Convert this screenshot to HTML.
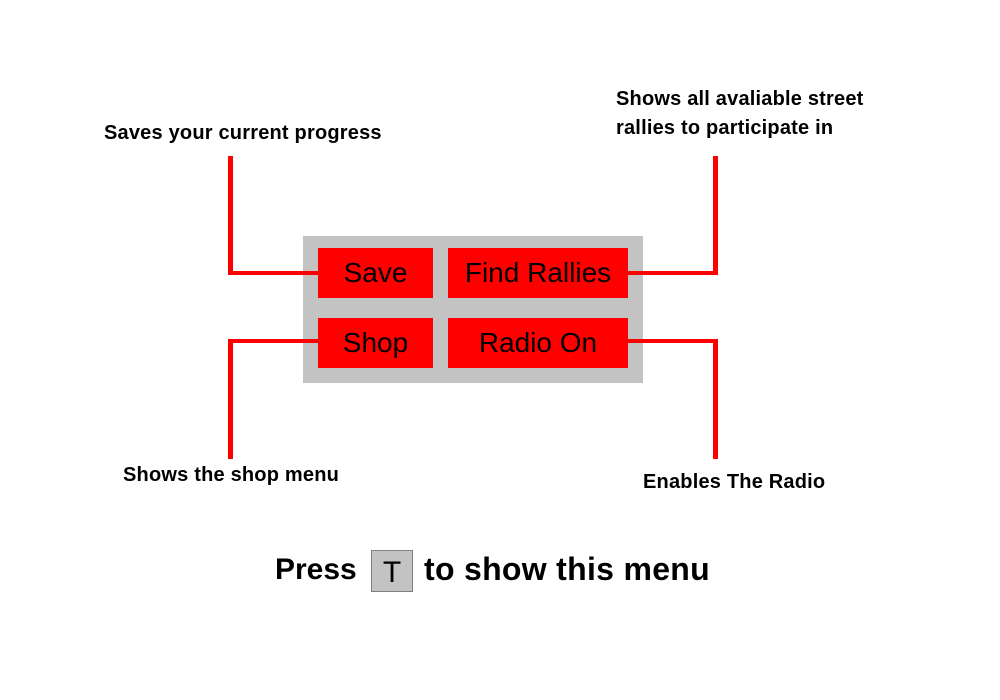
<!DOCTYPE html>
<html><head><meta charset="utf-8"><style>
body{margin:0;width:1000px;height:700px;background:#fff;position:relative;overflow:hidden;font-family:"Liberation Sans",sans-serif}
.a{position:absolute}
.r{position:absolute;background:#f00}
.lbl{position:absolute;font-weight:bold;font-size:20px;color:#000;white-space:nowrap;letter-spacing:0.2px;line-height:29px}
.btn{position:absolute;background:#f00;color:#000;font-size:28px;text-align:center;line-height:50px;height:50px}
</style></head><body>
<div class="lbl" style="left:104px;top:119px">Saves your current progress</div>
<div class="lbl" style="left:616px;top:85px">Shows all avaliable street<br>rallies to participate in</div>
<div class="lbl" style="left:123px;top:461px">Shows the shop menu</div>
<div class="lbl" style="left:643px;top:468px">Enables The Radio</div>

<div class="a" style="left:303px;top:236px;width:340px;height:147px;background:#c3c3c3"></div>
<div class="btn" style="left:318px;top:248px;width:115px">Save</div>
<div class="btn" style="left:448px;top:248px;width:180px">Find Rallies</div>
<div class="btn" style="left:318px;top:318px;width:115px">Shop</div>
<div class="btn" style="left:448px;top:318px;width:180px">Radio On</div>

<div class="r" style="left:228px;top:156px;width:5px;height:119px"></div>
<div class="r" style="left:228px;top:271px;width:90px;height:4px"></div>
<div class="r" style="left:713px;top:156px;width:5px;height:119px"></div>
<div class="r" style="left:628px;top:271px;width:90px;height:4px"></div>
<div class="r" style="left:228px;top:339px;width:90px;height:4px"></div>
<div class="r" style="left:228px;top:339px;width:5px;height:120px"></div>
<div class="r" style="left:628px;top:339px;width:90px;height:4px"></div>
<div class="r" style="left:713px;top:339px;width:5px;height:120px"></div>

<div class="a" style="left:275px;top:550px;font-weight:bold;font-size:30px;line-height:40px;white-space:nowrap">Press</div>
<div class="a" style="left:371px;top:550px;width:40px;height:40px;background:#c3c3c3;border:1px solid #808080;text-align:center;font-size:30px;line-height:44px">T</div>
<div class="a" style="left:424px;top:549px;font-weight:bold;font-size:32px;line-height:40px;white-space:nowrap;letter-spacing:0.3px">to show this menu</div>
</body></html>
